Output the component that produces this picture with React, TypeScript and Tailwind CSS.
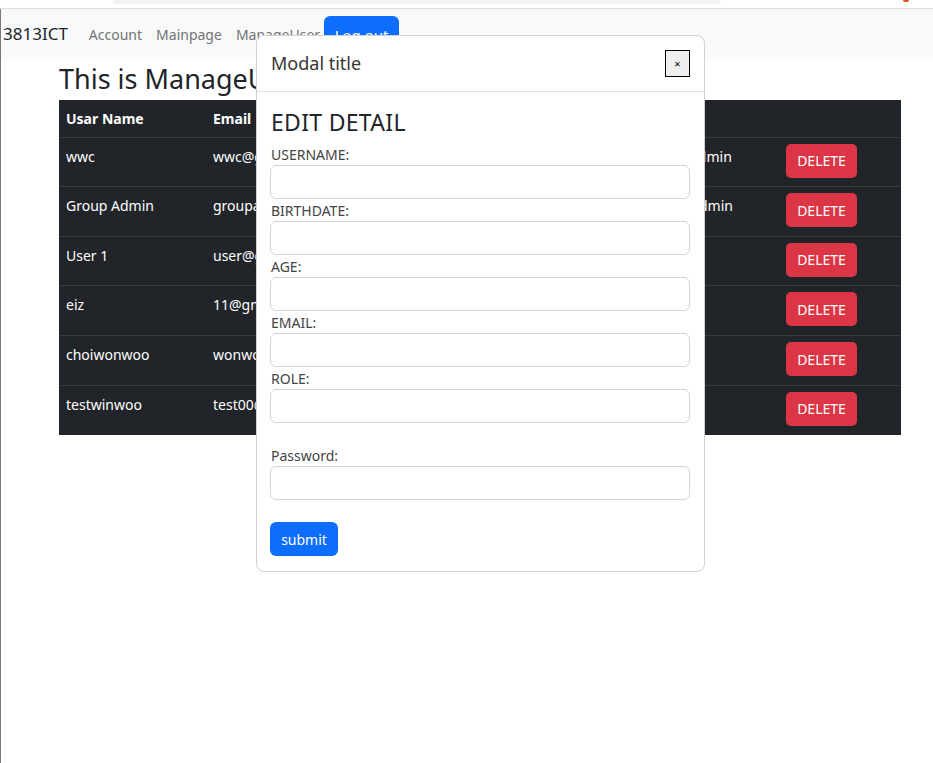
const users = [
  { name: "wwc", email: "wwc@gmail.com", role: "admin" },
  { name: "Group Admin", email: "groupadmin@gmail.com", role: "Admin" },
  { name: "User 1", email: "user@gmail.com", role: "" },
  { name: "eiz", email: "11@gmail.com", role: "" },
  { name: "choiwonwoo", email: "wonwoo@gmail.com", role: "" },
  { name: "testwinwoo", email: "test00@gmail.com", role: "" },
];

const fields = ["USERNAME:", "BIRTHDATE:", "AGE:", "EMAIL:", "ROLE:"];

const NavBar = () => {
  return (
    <nav className="flex items-center h-[50px] bg-[#f8f9fa] pl-[2px]">
      <span className="text-[17px] leading-[30px] text-[#212529] mr-[21px]">3813ICT</span>
      <div className="flex items-center text-[14px] text-[#737474]">
        <a className="mr-[14px]">Account</a>
        <a className="mr-[14px]">Mainpage</a>
        <a className="mr-[4px]">ManageUser</a>
        <button className="h-[38px] w-[75px] rounded-[6px] bg-[#0d6efd] text-white text-[15px] mt-[2px]">
          Log out
        </button>
      </div>
    </nav>
  );
};

const UserTable = () => {
  return (
    <table className="w-[842px] table-fixed bg-[#212529] text-white text-[14px] border-collapse">
      <thead>
        <tr className="h-[37px]">
          <th className="w-[147px] px-[7px] text-left font-bold">Usar Name</th>
          <th className="w-[200px] px-[7px] text-left font-bold">Email</th>
          <th className="w-[150px] px-[7px] text-left font-bold"></th>
          <th className="w-[127px] px-[7px] text-left font-bold"></th>
          <th className="w-[95px] px-[7px] text-left font-bold"></th>
          <th className="w-[123px] px-[8px] text-left font-bold"></th>
        </tr>
      </thead>
      <tbody>
        {users.map((u) => (
          <tr key={u.name} className="border-t border-[#373b3e] h-[49.67px]">
            <td className="align-top px-[7px] pt-[8px]">{u.name}</td>
            <td className="align-top px-[7px] pt-[8px] whitespace-nowrap overflow-hidden">{u.email}</td>
            <td className="align-top px-[7px] pt-[8px]"></td>
            <td className="align-top px-[7px] pt-[8px]"></td>
            <td className="align-top px-[7px] pt-[8px]">{u.role}</td>
            <td className="align-top px-[8px] pt-[6px]">
              <button className="h-[34px] w-[71px] rounded-[5px] bg-[#dc3545] text-white text-[14px]">
                DELETE
              </button>
            </td>
          </tr>
        ))}
      </tbody>
    </table>
  );
};

const EditModal = () => {
  return (
    <div className="absolute left-[256px] top-[35px] w-[449px] bg-white border border-[#cfd0d2] rounded-[8px]">
      <div className="flex items-center justify-between h-[56px] px-[14px] border-b border-[#dee2e6]">
        <h5 className="text-[18px] text-[#353535]">Modal title</h5>
        <button className="w-[25px] h-[27px] border border-black bg-[#efefef] text-[11px] leading-none flex items-center justify-center">
          ×
        </button>
      </div>
      <div className="px-[13px] pt-[16px] pb-[15px]">
        <h3 className="text-[23px] leading-[28px] text-[#212529] tracking-[0.3px] pl-[1px] mb-[9px]">EDIT DETAIL</h3>
        {fields.map((f) => (
          <div key={f} className="mb-[2px]">
            <label className="block text-[14px] leading-[20px] text-[#444] pl-[1px]">{f}</label>
            <input className="block w-[420px] h-[34px] border border-[#ced4da] rounded-[6px]" />
          </div>
        ))}
        <div className="mt-[23px]">
          <label className="block text-[14px] leading-[20px] text-[#444] pl-[1px]">Password:</label>
          <input type="password" className="block w-[420px] h-[34px] border border-[#ced4da] rounded-[6px]" />
        </div>
        <button className="mt-[22px] h-[34px] w-[68px] rounded-[6px] bg-[#0d6efd] text-white text-[14px]">
          submit
        </button>
      </div>
    </div>
  );
};

export default function App() {
  return (
    <div
      className="relative h-[763px] w-[933px] overflow-hidden bg-white"
      style={{ fontFamily: '"Noto Sans", "Noto Sans CJK KR", sans-serif' }}
    >
      {/* browser chrome remnant */}
      <div className="h-[9px] border-b border-[#dadce0] bg-white flex">
        <div className="ml-[113px] w-[608px] h-[4px] rounded-b-[6px] bg-[#f1f3f4]" />
        <div className="ml-auto mr-[24px] w-[6px] h-[2px] bg-[#d9541e] rounded-b" />
      </div>
      <div className="border-l border-[#7a7a7a] h-full">
        <NavBar />
        <div className="pl-[58px]">
          <h2 className="text-[27px] leading-[40px] text-[#212529] mb-[1px]">This is ManageUser</h2>
          <UserTable />
        </div>
      </div>
      <EditModal />
    </div>
  );
}
